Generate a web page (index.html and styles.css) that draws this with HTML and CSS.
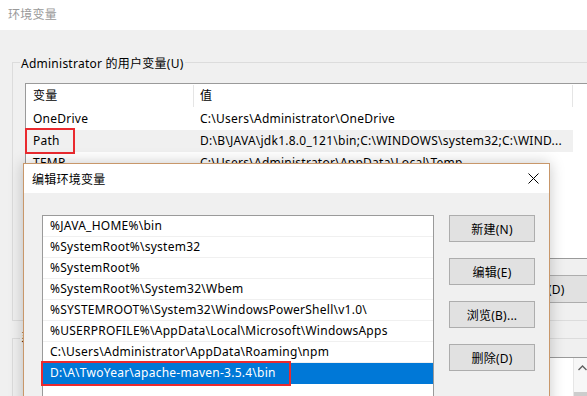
FILE: index.html
```html
<!DOCTYPE html>
<html lang="zh-CN">
<head>
    <meta charset="UTF-8">
    <meta name="viewport" content="width=device-width, initial-scale=1.0">
    <title>编辑环境变量</title>
    <link rel="stylesheet" href="styles.css">
</head>
<body>
    <div class="screen">
        <!-- background window: 环境变量 -->
        <div class="win">
            <div class="win-title">环境变量</div>

            <div class="group user-group">
                <div class="legend">Administrator 的用户变量(U)</div>
                <div class="listview">
                    <div class="lv-head">
                        <div class="c1">变量</div>
                        <div class="c2">值</div>
                    </div>
                    <div class="lv-row">
                        <div class="c1">OneDrive</div>
                        <div class="c2">C:\Users\Administrator\OneDrive</div>
                    </div>
                    <div class="lv-row hot">
                        <div class="c1"><span class="mark path-mark">Path</span></div>
                        <div class="c2">D:\B\JAVA\jdk1.8.0_121\bin;C:\WINDOWS\system32;C:\WIND...</div>
                    </div>
                    <div class="lv-row">
                        <div class="c1">TEMP</div>
                        <div class="c2">C:\Users\Administrator\AppData\Local\Temp</div>
                    </div>
                    <div class="lv-row">
                        <div class="c1">TMP</div>
                        <div class="c2">C:\Users\Administrator\AppData\Local\Temp</div>
                    </div>
                </div>
                <div class="btn-row">
                    <button class="btn bg-btn">新建(N)...</button>
                    <button class="btn bg-btn">编辑(E)...</button>
                    <button class="btn bg-btn">删除(D)</button>
                </div>
            </div>

            <div class="group sys-group">
                <div class="legend">系统变量(S)</div>
                <div class="listview sys-list">
                    <div class="lv-area"></div>
                    <div class="vscroll">
                        <div class="vs-arrow">
                            <svg width="9" height="6" viewBox="0 0 9 6"><path d="M0.5 5 L4.5 1 L8.5 5" fill="none" stroke="#606060" stroke-width="1.4"/></svg>
                        </div>
                        <div class="vs-thumb"></div>
                    </div>
                </div>
            </div>
        </div>

        <!-- dialog on top: 编辑环境变量 -->
        <div class="dialog">
            <div class="dlg-title">
                <span>编辑环境变量</span>
                <svg class="close" width="11" height="11" viewBox="0 0 11 11"><path d="M0.5 0.5 L10.5 10.5 M10.5 0.5 L0.5 10.5" stroke="#000" stroke-width="1"/></svg>
            </div>
            <div class="dlg-body">
                <div class="path-list">
                    <div class="pl-row">%JAVA_HOME%\bin</div>
                    <div class="pl-row">%SystemRoot%\system32</div>
                    <div class="pl-row">%SystemRoot%</div>
                    <div class="pl-row">%SystemRoot%\System32\Wbem</div>
                    <div class="pl-row">%SYSTEMROOT%\System32\WindowsPowerShell\v1.0\</div>
                    <div class="pl-row">%USERPROFILE%\AppData\Local\Microsoft\WindowsApps</div>
                    <div class="pl-row">C:\Users\Administrator\AppData\Roaming\npm</div>
                    <div class="pl-row selected"><span class="mark sel-mark">D:\A\TwoYear\apache-maven-3.5.4\bin</span></div>
                </div>
                <div class="dlg-buttons">
                    <button class="btn">新建(N)</button>
                    <button class="btn">编辑(E)</button>
                    <button class="btn">浏览(B)...</button>
                    <button class="btn">删除(D)</button>
                </div>
            </div>
        </div>
    </div>
</body>
</html>
```

FILE: styles.css
```css
* {
    box-sizing: border-box;
}

body {
    margin: 0;
    padding: 0;
    background: #f0f0f0;
    font-family: 'Noto Sans', 'Noto Sans CJK SC', sans-serif;
    font-size: 12px;
    letter-spacing: 0.25px;
    color: #000;
}

.screen {
    position: relative;
    width: 587px;
    height: 396px;
    overflow: hidden;
    background: #f0f0f0;
}

/* background window */

.win-title {
    height: 30px;
    line-height: 30px;
    padding-left: 8px;
    background: #fff;
    color: #999;
}

.group {
    width: 600px;
    margin-left: 12px;
    border: 1px solid #dcdcdc;
}

.user-group {
    margin-top: 32px;
    padding-bottom: 17px;
}

.sys-group {
    margin-top: 17px;
    height: 120px;
}

.legend {
    width: fit-content;
    height: 16px;
    line-height: 16px;
    margin: -7px 0 0 7px;
    padding: 0 1px;
    background: #f0f0f0;
}

.sys-group .legend {
    margin-top: -9px;
}

.listview {
    margin: 11px 0 0 12px;
    width: 600px;
    height: 176px;
    background: #fff;
    border: 1px solid #9a9a9a;
}

.lv-head,
.lv-row {
    display: flex;
    width: 547px;
}

.lv-head {
    height: 24px;
    line-height: 24px;
}

.lv-row {
    height: 22px;
    line-height: 22px;
    white-space: nowrap;
}

.lv-row.hot {
    background: #f0f0f0;
}

.c1 {
    width: 168px;
    padding-left: 7px;
}

.c2 {
    width: 379px;
    padding-left: 6px;
    overflow: hidden;
}

.lv-head .c1,
.lv-head .c2 {
    border-right: 1px solid #e5e5e5;
    margin: 1px 0;
    height: 22px;
    line-height: 22px;
}

.mark {
    display: inline-block;
    outline: 2px solid #ea2a2f;
}

.path-mark {
    width: 46px;
    height: 22px;
    margin-left: -6px;
    padding-left: 6px;
}

.btn-row {
    display: flex;
    justify-content: flex-end;
    gap: 8px;
    margin-top: 16px;
    padding-right: 23px;
}

.btn {
    font-family: inherit;
    font-size: 12px;
    letter-spacing: 0.25px;
    color: #000;
    background: #e1e1e1;
    border: 1px solid #adadad;
    border-radius: 0;
    padding: 0;
}

.bg-btn {
    width: 88px;
    height: 28px;
}

.sys-list {
    display: flex;
    height: 100px;
    border-right: none;
    border-bottom: none;
}

.lv-area {
    width: 547px;
}

.vscroll {
    width: 17px;
    background: #f7f7f7;
    border-left: 1px solid #e6e6e6;
}

.vs-arrow {
    height: 20px;
    display: flex;
    align-items: center;
    justify-content: center;
}

.vs-thumb {
    margin-top: 14px;
    height: 40px;
    background: #cdcdcd;
}

/* dialog window */

.dialog {
    position: absolute;
    left: 23px;
    top: 163px;
    width: 527px;
    height: 260px;
    border: 1px solid #c8976a;
    background: #f0f0f0;
    box-shadow: 0 0 14px rgba(0, 0, 0, 0.22);
}

.dlg-title {
    height: 29px;
    display: flex;
    align-items: center;
    justify-content: space-between;
    padding: 0 10px 0 8px;
    background: #fff;
}

.dlg-body {
    display: flex;
    align-items: flex-start;
    padding: 22px 0 0 18px;
}

.path-list {
    width: 392px;
    height: 220px;
    background: #fff;
    border: 1px solid #9a9a9a;
}

.pl-row {
    height: 21px;
    line-height: 20px;
    padding-left: 7px;
    border-bottom: 1px solid #f0f0f0;
    white-space: nowrap;
}

.pl-row.selected {
    padding-left: 0;
    background: #0078d7;
    color: #fff;
    border-bottom: none;
}

.sel-mark {
    width: 246px;
    height: 21px;
    padding-left: 7px;
}

.dlg-buttons {
    display: flex;
    flex-direction: column;
    gap: 16px;
    margin-left: 15px;
}

.dlg-buttons .btn {
    width: 86px;
    height: 27px;
}
```
